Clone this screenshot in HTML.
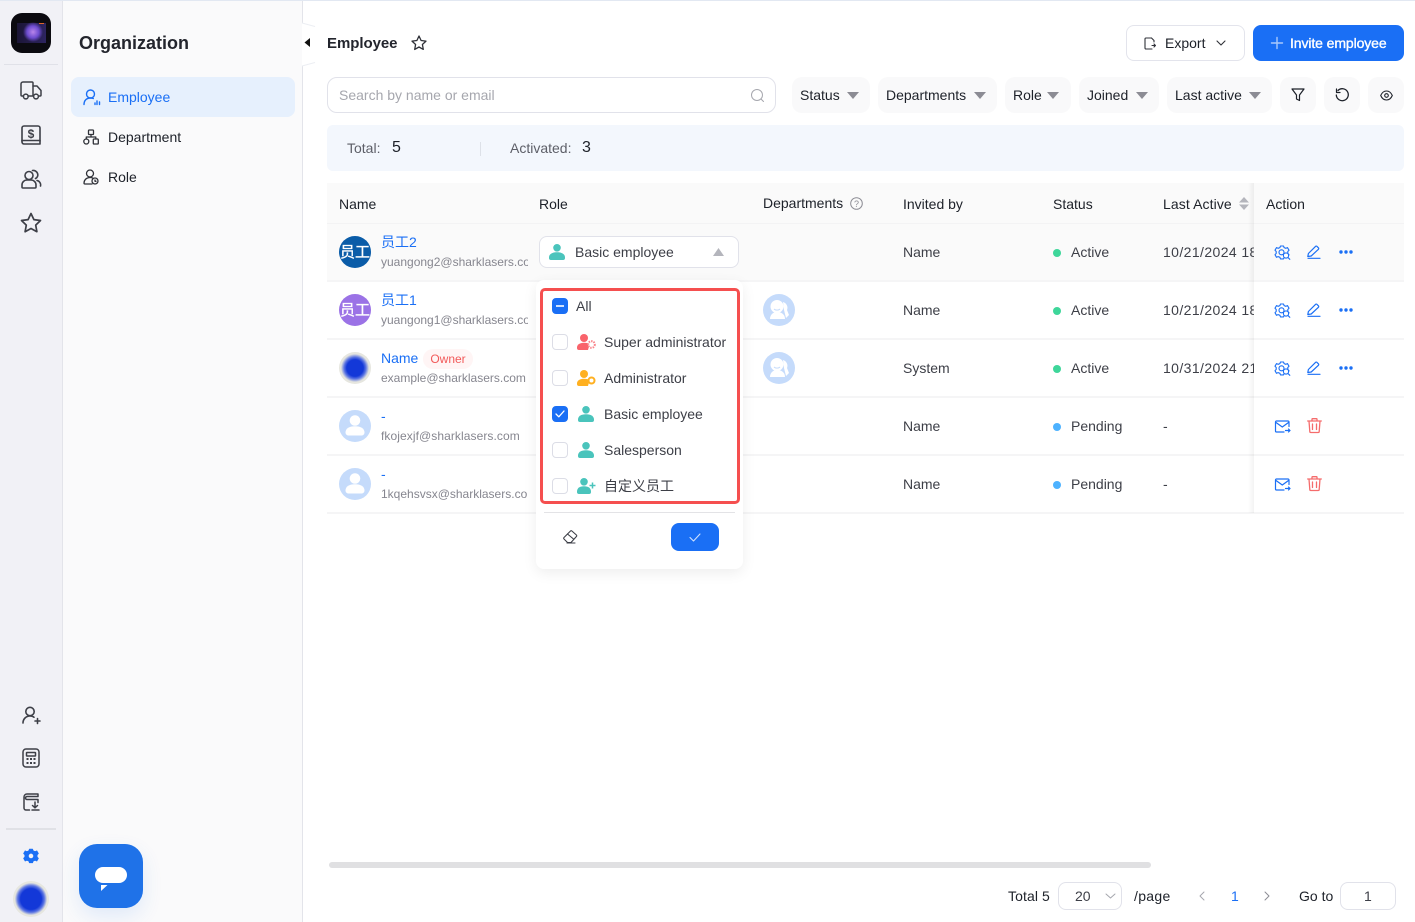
<!DOCTYPE html>
<html><head><meta charset="utf-8"><style>
*{box-sizing:border-box}
html,body{margin:0;padding:0;width:1415px;height:922px;overflow:hidden;background:#fff;font-family:"Liberation Sans","Noto Sans CJK SC",sans-serif;font-size:14px;color:#1d2129}
.a{position:absolute}
.t{position:absolute;white-space:nowrap;line-height:20px}
svg{position:absolute;overflow:visible}
.ln{fill:none;stroke-linecap:round;stroke-linejoin:round}
.fb{position:absolute;top:77px;height:36px;background:#f9f9fa;border-radius:10px}
.tri{position:absolute;width:0;height:0;border-left:6px solid transparent;border-right:6px solid transparent;border-top:7px solid #8c8c94}
.cb{position:absolute;left:552px;width:16px;height:16px;border-radius:4px;border:1px solid #dcdde6;background:#fff}
.cb.on{background:#1a6ff5;border-color:#1a6ff5}
.rowl{position:absolute;left:327px;width:1077px;height:2px;background:#f5f5f6}
.mail{color:#86868f;font-size:12px}
.nm{color:#1a6ff5}
.dot{position:absolute;left:1053px;width:8px;height:8px;border-radius:50%}
.g{color:#3d3f47}
.av{position:absolute;left:339px;width:32px;height:32px;border-radius:50%;color:#fff;font-size:15px;text-align:center;line-height:33px;-webkit-text-stroke:.3px #fff}
.clip{position:absolute;overflow:hidden;white-space:nowrap}
</style></head><body>
<div class="a" style="left:0;top:0;width:1415px;height:1px;background:#e2e8f2"></div>

<!-- rail -->
<div class="a" style="left:0;top:1px;width:63px;height:921px;background:#f1f1f6;border-right:1px solid #e3e4ea"></div>
<div class="a" style="left:11px;top:13px;width:40px;height:40px;border-radius:11px;background:#0b0a10;overflow:hidden">
 <div class="a" style="left:6px;top:10px;width:29px;height:20px;background:linear-gradient(90deg,#1b1536,#2d2460)"></div>
 <div class="a" style="left:12px;top:9px;width:20px;height:20px;background:radial-gradient(circle closest-side,#b885ea,#6d4ccf 60%,transparent)"></div>
 <div class="a" style="left:28px;top:10px;width:5px;height:1px;background:#e0662a"></div>
</div>
<div class="a" style="left:4px;top:64px;width:54px;height:1px;background:#e0e1e8"></div>
<svg style="left:20px;top:81px" width="22" height="20" viewBox="0 0 22 20"><g class="ln" stroke="#3d3f47" stroke-width="1.500"><path d="M3.500 15H2a1 1 0 0 1-1-1V3a2 2 0 0 1 2-2h9a1 1 0 0 1 1 1v13H8"/><path d="M13 5h4l4 4.500V14a1 1 0 0 1-1 1h-1"/><circle cx="5.800" cy="15.500" r="2.400"/><circle cx="16" cy="15.500" r="2.400"/></g></svg>
<svg style="left:21px;top:125px" width="20" height="20" viewBox="0 0 20 20"><g class="ln" stroke="#3d3f47" stroke-width="1.600"><path d="M1 16V3a2 2 0 0 1 2-2h14a2 2 0 0 1 2 2v13"/><path d="M1 15.500h18V19H3a2 2 0 0 1-2-2z"/></g><text x="10" y="13" font-size="12" font-weight="bold" text-anchor="middle" fill="#3d3f47" font-family="Liberation Sans">$</text></svg>
<svg style="left:21px;top:169px" width="21" height="20" viewBox="0 0 21 20"><g class="ln" stroke="#3d3f47" stroke-width="1.600"><circle cx="8" cy="6.500" r="4"/><path d="M1 18v-2a5 5 0 0 1 5-5h4a5 5 0 0 1 5 5v2a1 1 0 0 1-1 1H2a1 1 0 0 1-1-1z"/><path d="M11.500 1.500a4.500 4.500 0 0 1 5 6 4 4 0 0 1-2 2M16 11.500a4.500 4.500 0 0 1 3.500 5.500"/></g></svg>
<svg style="left:20px;top:212px" width="22" height="22" viewBox="0 0 22 22"><path class="ln" stroke="#3d3f47" stroke-width="1.700" d="M11 1.500l2.900 6.100 6.600.9-4.800 4.600 1.200 6.600-5.900-3.200-5.900 3.200 1.200-6.600L1.500 8.500l6.600-.9z"/></svg>

<svg style="left:22px;top:706px" width="19" height="18" viewBox="0 0 19 18"><g class="ln" stroke="#3d3f47" stroke-width="1.600"><circle cx="8" cy="5.500" r="4.200"/><path d="M1 17c0-4 3-7 7-7 1.500 0 3 .4 4 1.200M13 15h5M15.500 12.500v5"/></g></svg>
<svg style="left:22px;top:748px" width="18" height="20" viewBox="0 0 18 20"><g class="ln" stroke="#3d3f47" stroke-width="1.500"><rect x="1" y="1" width="16" height="18" rx="3"/><rect x="4.500" y="4.500" width="9" height="3.500" rx=".5"/></g><g fill="#3d3f47"><rect x="4.500" y="10" width="2" height="2"/><rect x="8" y="10" width="2" height="2"/><rect x="11.500" y="10" width="2" height="2"/><rect x="4.500" y="14" width="2" height="2"/><rect x="8" y="14" width="2" height="2"/><rect x="11.500" y="14" width="2" height="2"/></g></svg>
<svg style="left:23px;top:793px" width="17" height="18" viewBox="0 0 17 18"><g class="ln" stroke="#3d3f47" stroke-width="1.500"><path d="M6.500 17H3a2 2 0 0 1-2-2V4a3 3 0 0 1 3-3h11v2.500H4A1.500 1.500 0 0 0 4 6.500h11v3"/><path d="M12 9v5.500M9.500 12.500l2.500 2.300 2.500-2.300M9 17h7"/></g></svg>
<div class="a" style="left:6px;top:828px;width:50px;height:2px;background:#e0e1e6"></div>
<svg style="left:23px;top:848px" width="16" height="16" viewBox="0 0 14 15"><path fill="#1a6ff5" fill-rule="evenodd" stroke="#1a6ff5" stroke-width=".6" stroke-linejoin="round" d="M5.500 1h3l.6 1.600 1.800.7 1.600-.7 1.500 2.600-1.200 1.300v1.900l1.200 1.300-1.500 2.600-1.600-.7-1.800.7-.6 1.600h-3l-.6-1.600-1.800-.7-1.600.7L0 9.700l1.200-1.300V6.500L0 5.200l1.500-2.600 1.600.7 1.800-.7zM7 5a2.450 2.450 0 1 0 0 4.900A2.450 2.450 0 0 0 7 5z"/></svg>
<div class="a" style="left:13px;top:881px;width:36px;height:36px;border-radius:50%;background:radial-gradient(circle closest-side,#1338d8 0 58%,#5b74e2 74%,#e6e6df 90%)"></div>

<!-- sidebar -->
<div class="a" style="left:63px;top:1px;width:240px;height:921px;background:#fafafb;border-right:1px solid #e3e4ea"></div>
<div class="t" style="left:79px;top:33px;font-size:18px;font-weight:bold;color:#23252d">Organization</div>
<div class="a" style="left:71px;top:77px;width:224px;height:40px;border-radius:8px;background:#e6f0fd"></div>
<svg style="left:83px;top:89px" width="18" height="17" viewBox="0 0 18 17"><g class="ln" stroke="#1a6ff5" stroke-width="1.400"><circle cx="7.500" cy="5" r="4"/><path d="M1 15.500c0-4 2.500-6.500 6.500-6.500 1 0 2 .2 2.800.5"/><path d="M12 14v1.500M14 12v3.500M16.500 13v2.500"/></g></svg>
<div class="t nm" style="left:108px;top:87px">Employee</div>
<svg style="left:83px;top:129px" width="16" height="16" viewBox="0 0 16 16"><g class="ln" stroke="#2f3138" stroke-width="1.300"><rect x="5.500" y="1" width="5" height="4.500" rx=".8"/><circle cx="3.300" cy="12.500" r="2.500"/><rect x="10.300" y="10" width="5" height="5" rx=".8"/><path d="M8 5.500V8M3.300 10V8h9.500v2"/></g></svg>
<div class="t" style="left:108px;top:127px">Department</div>
<svg style="left:83px;top:169px" width="16" height="16" viewBox="0 0 16 16"><g class="ln" stroke="#2f3138" stroke-width="1.300"><circle cx="7" cy="4.500" r="3.500"/><path d="M9 15H2a1 1 0 0 1-1-1c0-3 2.500-5.500 6-5.500 1 0 2 .2 2.800.6"/><circle cx="12" cy="12" r="3"/><path d="M12 11v1.300h1"/></g></svg>
<div class="t" style="left:108px;top:167px">Role</div>
<div class="a" style="left:79px;top:844px;width:64px;height:64px;border-radius:18px;background:#1f72e8;box-shadow:0 8px 20px rgba(31,114,232,.12)"></div>
<div class="a" style="left:95px;top:867px;width:32px;height:16px;border-radius:8px;background:#fff"></div>
<svg style="left:101px;top:885px" width="7" height="6"><path fill="#fff" d="M0 0h6.500L0 6z"/></svg>
<!-- collapse tab -->
<svg style="left:302px;top:23px" width="14" height="43" viewBox="0 0 14 43"><path d="M0 0l13 4v35L0 43z" fill="#fff"/><path d="M0 0l13 3.500M13 39.500L0 43" stroke="#eceef3" fill="none"/><path d="M8 15v9l-5.500-4.500z" fill="#111"/></svg>

<!-- header -->
<div class="t" style="left:327px;top:33.500px;font-size:15px;font-weight:bold;color:#23252d;letter-spacing:-.05px">Employee</div>
<svg style="left:411px;top:35px" width="16" height="16" viewBox="0 0 16 16"><path class="ln" stroke="#2f3138" stroke-width="1.300" d="M8 1l2.100 4.500 4.900.6-3.600 3.400.9 4.900L8 12l-4.300 2.400.9-4.900L1 6.100l4.900-.6z"/></svg>
<div class="a" style="left:1126px;top:25px;width:119px;height:36px;border:1px solid #e3e4ec;border-radius:8px;background:#fff"></div>
<svg style="left:1144px;top:37px" width="12" height="13" viewBox="0 0 12 13"><g class="ln" stroke="#2f3138" stroke-width="1.100"><path d="M7.500 1H2a1 1 0 0 0-1 1v9a1 1 0 0 0 1 1h6"/><path d="M7.500 1L10 3.500V5M8 8.500h3.500M10 7l1.500 1.500L10 10"/></g></svg>
<div class="t" style="left:1165px;top:33px">Export</div>
<svg style="left:1216px;top:40px" width="10" height="6"><path class="ln" stroke="#2f3138" stroke-width="1.100" d="M1 1l4 4 4-4"/></svg>
<div class="a" style="left:1253px;top:25px;width:151px;height:36px;border-radius:8px;background:#1a6ff5"></div>
<svg style="left:1270px;top:36px" width="14" height="14"><path class="ln" stroke="#a9c9fb" stroke-width="1.400" d="M7 1.500v11M1.500 7h11"/></svg>
<div class="t" style="left:1290px;top:33px;color:#fff;-webkit-text-stroke:.35px #fff;letter-spacing:-.1px">Invite employee</div>

<!-- search -->
<div class="a" style="left:327px;top:77px;width:449px;height:36px;border:1px solid #e1e2ea;border-radius:10px;background:#fff"></div>
<div class="t" style="left:339px;top:85px;color:#a6a7ae">Search by name or email</div>
<svg style="left:751px;top:89px" width="13" height="13"><g class="ln" stroke="#a6a7ae" stroke-width="1"><circle cx="6" cy="6" r="5.500"/><path d="M10 10l2.500 2.500"/></g></svg>

<!-- filters -->
<div class="fb" style="left:792px;width:78px"></div><div class="t" style="left:800px;top:85px">Status</div><div class="tri" style="left:847px;top:92px"></div>
<div class="fb" style="left:878px;width:119px"></div><div class="t" style="left:886px;top:85px">Departments</div><div class="tri" style="left:974px;top:92px"></div>
<div class="fb" style="left:1005px;width:66px"></div><div class="t" style="left:1013px;top:85px">Role</div><div class="tri" style="left:1047px;top:92px"></div>
<div class="fb" style="left:1079px;width:80px"></div><div class="t" style="left:1087px;top:85px">Joined</div><div class="tri" style="left:1136px;top:92px"></div>
<div class="fb" style="left:1167px;width:105px"></div><div class="t" style="left:1175px;top:85px">Last active</div><div class="tri" style="left:1249px;top:92px"></div>
<div class="fb" style="left:1280px;width:36px"></div>
<svg style="left:1291px;top:88px" width="14" height="14"><path class="ln" stroke="#1d2129" stroke-width="1.200" d="M1 1h12L8.500 7v5.500l-3-1.500V7z"/></svg>
<div class="fb" style="left:1324px;width:36px"></div>
<svg style="left:1335px;top:88px" width="14" height="14" viewBox="0 0 14 14"><g class="ln" stroke="#1d2129" stroke-width="1.300"><path d="M3 2.500A6 6 0 1 1 1.300 7"/><path d="M1.500 1v3.500H5" stroke-width="1.200"/></g></svg>
<div class="fb" style="left:1368px;width:36px"></div>
<svg style="left:1380px;top:90px" width="13" height="11" viewBox="0 0 13 11"><g class="ln" stroke="#1d2129" stroke-width="1.100"><path d="M.7 5.500C2 2.500 4 1 6.500 1s4.500 1.500 5.800 4.500C11 8.500 9 10 6.500 10S2 8.500.7 5.500z"/><circle cx="6.500" cy="5.500" r="1.800"/></g></svg>

<!-- stats -->
<div class="a" style="left:327px;top:125px;width:1077px;height:46px;background:#f3f7fd;border-radius:6px"></div>
<div class="t" style="left:347px;top:138px;color:#5d5f68">Total:</div>
<div class="t" style="left:392px;top:138px;font-size:16px;color:#1d2129">5</div>
<div class="a" style="left:480px;top:142px;width:1px;height:14px;background:#dde1e8"></div>
<div class="t" style="left:510px;top:138px;color:#5d5f68">Activated:</div>
<div class="t" style="left:582px;top:138px;font-size:16px;color:#1d2129">3</div>

<!-- table -->
<div class="a" style="left:327px;top:183px;width:1077px;height:98px;background:#fafafa"></div>
<div class="a" style="left:327px;top:223px;width:1077px;height:1px;background:#f3f3f4"></div>
<div class="rowl" style="top:280px"></div><div class="rowl" style="top:338px"></div><div class="rowl" style="top:396px"></div><div class="rowl" style="top:454px"></div><div class="rowl" style="top:512px"></div>
<div class="t" style="left:339px;top:194px">Name</div>
<div class="t" style="left:539px;top:194px">Role</div>
<div class="t" style="left:763px;top:193px">Departments</div>
<svg style="left:850px;top:197px" width="13" height="13"><circle cx="6.500" cy="6.500" r="5.800" fill="none" stroke="#8c8c94"/><text x="6.500" y="9.800" font-size="9" text-anchor="middle" fill="#8c8c94" font-family="Liberation Sans">?</text></svg>
<div class="t" style="left:903px;top:194px">Invited by</div>
<div class="t" style="left:1053px;top:194px">Status</div>
<div class="t" style="left:1163px;top:194px;letter-spacing:.1px">Last Active</div>
<svg style="left:1239px;top:197px" width="10" height="13"><path fill="#b4b5bc" d="M5 0l5 5.500H0zM0 7.500h10L5 13z"/></svg>

<!-- names -->
<div class="av" style="top:236px;background:#0a5ca8">员工</div>
<div class="t nm" style="left:381px;top:232px">员工2</div>
<div class="clip mail" style="left:381px;top:254px;width:147px;line-height:16px">yuangong2@sharklasers.com</div>
<div class="av" style="top:294px;background:#9b72e6">员工</div>
<div class="t nm" style="left:381px;top:290px">员工1</div>
<div class="clip mail" style="left:381px;top:312px;width:147px;line-height:16px">yuangong1@sharklasers.com</div>
<div class="a" style="left:339px;top:352px;width:32px;height:32px;border-radius:50%;background:radial-gradient(circle closest-side,#1338d8 0 52%,#5b74e2 68%,#e6e6df 88%)"></div>
<div class="t nm" style="left:381px;top:348px">Name</div>
<div class="a" style="left:423px;top:349px;width:50px;height:20px;border-radius:10px;background:#fff5f5;color:#f25a5a;font-size:12px;line-height:20px;text-align:center">Owner</div>
<div class="t mail" style="left:381px;top:368px">example@sharklasers.com</div>
<svg style="left:339px;top:410px" width="32" height="32"><circle cx="16" cy="16" r="16" fill="#c5dbfb"/><circle cx="16" cy="10.500" r="5.300" fill="#fff"/><path fill="#fff" d="M16 16.200c6 0 9.500 2.300 9.500 6.300 0 1.700-1.300 3-3 3h-13c-1.700 0-3-1.300-3-3 0-4 3.500-6.300 9.500-6.300z"/></svg>
<div class="t nm" style="left:381px;top:406px">-</div>
<div class="t mail" style="left:381px;top:426px;letter-spacing:.08px">fkojexjf@sharklasers.com</div>
<svg style="left:339px;top:468px" width="32" height="32"><circle cx="16" cy="16" r="16" fill="#c5dbfb"/><circle cx="16" cy="10.500" r="5.300" fill="#fff"/><path fill="#fff" d="M16 16.200c6 0 9.500 2.300 9.500 6.300 0 1.700-1.300 3-3 3h-13c-1.700 0-3-1.300-3-3 0-4 3.500-6.300 9.500-6.300z"/></svg>
<div class="t nm" style="left:381px;top:464px">-</div>
<div class="clip mail" style="left:381px;top:486px;width:146px;line-height:16px">1kqehsvsx@sharklasers.com</div>

<!-- role select -->
<div class="a" style="left:539px;top:236px;width:200px;height:32px;border:1px solid #e1e2ea;border-radius:8px;background:#fff"></div>
<svg style="left:549px;top:244px" width="16" height="16"><circle cx="8" cy="3.800" r="3.800" fill="#4ac4bc"/><path fill="#4ac4bc" d="M8 8.200c5 0 8 2 8 5.300V14a2 2 0 0 1-2 2H2a2 2 0 0 1-2-2v-.5C0 10.200 3 8.200 8 8.200z"/></svg>
<div class="t g" style="left:575px;top:242px">Basic employee</div>
<svg style="left:713px;top:248px" width="11" height="8"><path fill="#b4b5bc" d="M5.500 0L11 8H0z"/></svg>

<!-- dept icons -->
<svg style="left:763px;top:294px" width="32" height="32"><circle cx="16" cy="16" r="16" fill="#c5dbfb"/><circle cx="14" cy="12.500" r="6.500" fill="#fff"/><path fill="#fff" d="M7 25c0-4 3-7 7-7s8 2 8 7zM20 8a6 6 0 0 1 4 8l2 5-3 3-2-8z"/><path d="M11 15c1.500 1.500 4.500 1.500 6 0" stroke="#c5dbfb" fill="none"/></svg>
<svg style="left:763px;top:352px" width="32" height="32"><circle cx="16" cy="16" r="16" fill="#c5dbfb"/><circle cx="14" cy="12.500" r="6.500" fill="#fff"/><path fill="#fff" d="M7 25c0-4 3-7 7-7s8 2 8 7zM20 8a6 6 0 0 1 4 8l2 5-3 3-2-8z"/><path d="M11 15c1.500 1.500 4.500 1.500 6 0" stroke="#c5dbfb" fill="none"/></svg>

<!-- invited / status -->
<div class="t g" style="left:903px;top:242px">Name</div><div class="t g" style="left:903px;top:300px">Name</div><div class="t g" style="left:903px;top:358px">System</div><div class="t g" style="left:903px;top:416px">Name</div><div class="t g" style="left:903px;top:474px">Name</div>
<div class="dot" style="top:249px;background:#3ed69a"></div><div class="t g" style="left:1071px;top:242px">Active</div>
<div class="dot" style="top:307px;background:#3ed69a"></div><div class="t g" style="left:1071px;top:300px">Active</div>
<div class="dot" style="top:365px;background:#3ed69a"></div><div class="t g" style="left:1071px;top:358px">Active</div>
<div class="dot" style="top:423px;background:#4db2ff"></div><div class="t g" style="left:1071px;top:416px">Pending</div>
<div class="dot" style="top:481px;background:#4db2ff"></div><div class="t g" style="left:1071px;top:474px">Pending</div>
<div class="clip g" style="left:1163px;top:242px;width:91px;line-height:20px;letter-spacing:.4px">10/21/2024 18:00</div>
<div class="clip g" style="left:1163px;top:300px;width:91px;line-height:20px;letter-spacing:.4px">10/21/2024 18:00</div>
<div class="clip g" style="left:1163px;top:358px;width:91px;line-height:20px;letter-spacing:.4px">10/31/2024 21:00</div>
<div class="t g" style="left:1163px;top:416px">-</div><div class="t g" style="left:1163px;top:474px">-</div>

<!-- action col -->
<div class="a" style="left:1248px;top:183px;width:6px;height:330px;background:linear-gradient(90deg,rgba(0,0,0,0),rgba(0,0,0,.05))"></div>
<div class="t" style="left:1266px;top:194px">Action</div>
<svg width="0" height="0"><defs>
<g id="gear"><path class="ln" stroke="#1a6ff5" stroke-width="1.100" d="M5.500 1h3l.6 1.600 1.800.7 1.600-.7 1.500 2.600-1.200 1.300v1.900l1.200 1.300-1.500 2.600-1.600-.7-1.800.7-.6 1.600h-3l-.6-1.600-1.800-.7-1.600.7L0 9.700l1.200-1.300V6.500L0 5.200l1.500-2.600 1.600.7 1.800-.7z"/><circle cx="6.500" cy="7.300" r="2.500" class="ln" stroke="#1a6ff5" stroke-width="1.100"/><circle cx="11" cy="10.500" r="2.600" stroke="#1a6ff5" stroke-width="1.100" fill="#fff"/><path class="ln" stroke="#1a6ff5" stroke-width="1.100" d="M13 12.500l1.800 1.800"/></g>
<g id="pen"><path class="ln" stroke="#1a6ff5" stroke-width="1.200" d="M.8 11.500l.6-3L8.500 1.400a1 1 0 0 1 1.500 0l1.400 1.400a1 1 0 0 1 0 1.500L4.200 11zM1 13.300h12"/></g>
<g id="dots" fill="#1a6ff5"><circle cx="2" cy="2" r="1.700"/><circle cx="7" cy="2" r="1.700"/><circle cx="12" cy="2" r="1.700"/></g>
<g id="env"><path class="ln" stroke="#1a6ff5" stroke-width="1.200" d="M14 6.500V2a1 1 0 0 0-1-1H1.500a1 1 0 0 0-1 1v9a1 1 0 0 0 1 1H9"/><path class="ln" stroke="#1a6ff5" stroke-width="1.200" d="M1 2.500l6.300 4.500 6.200-4.500M10.500 10.500h4.500M13.500 9l1.500 1.500-1.500 1.500"/></g>
<g id="trash"><path class="ln" stroke="#f56c6c" stroke-width="1.300" d="M.7 3h13.600M5 3V1.200a.5.500 0 0 1 .5-.5h4a.5.500 0 0 1 .5.500V3M2 3l.8 10.500a1 1 0 0 0 1 1h7.400a1 1 0 0 0 1-1L13 3M5.500 6v5.500M9.500 6v5.500"/></g>
</defs></svg>
<svg style="left:1275px;top:245px" width="16" height="15"><use href="#gear"/></svg>
<svg style="left:1307px;top:245px" width="14" height="15"><use href="#pen"/></svg>
<svg style="left:1339px;top:250px" width="15" height="4"><use href="#dots"/></svg>
<svg style="left:1275px;top:303px" width="16" height="15"><use href="#gear"/></svg>
<svg style="left:1307px;top:303px" width="14" height="15"><use href="#pen"/></svg>
<svg style="left:1339px;top:308px" width="15" height="4"><use href="#dots"/></svg>
<svg style="left:1275px;top:361px" width="16" height="15"><use href="#gear"/></svg>
<svg style="left:1307px;top:361px" width="14" height="15"><use href="#pen"/></svg>
<svg style="left:1339px;top:366px" width="15" height="4"><use href="#dots"/></svg>
<svg style="left:1275px;top:420px" width="15" height="13"><use href="#env"/></svg>
<svg style="left:1307px;top:418px" width="15" height="15"><use href="#trash"/></svg>
<svg style="left:1275px;top:478px" width="15" height="13"><use href="#env"/></svg>
<svg style="left:1307px;top:476px" width="15" height="15"><use href="#trash"/></svg>

<!-- dropdown -->
<div class="a" style="left:536px;top:280px;width:207px;height:289px;background:#fff;border-radius:8px;box-shadow:0 4px 14px rgba(0,0,0,.07)"></div>
<div class="a" style="left:540px;top:288px;width:200px;height:216px;border:3px solid #f54f4f;border-radius:5px"></div>
<div class="cb on" style="top:298px"></div><div class="a" style="left:556px;top:305px;width:8px;height:2px;background:#cfe1fd"></div>
<div class="t g" style="left:576px;top:296px">All</div>
<div class="cb" style="top:334px"></div>
<svg style="left:577px;top:334px" width="19" height="17" viewBox="0 0 19 17"><circle cx="7" cy="4" r="4" fill="#f9636b"/><path fill="#f9636b" d="M7 8.800c2.500 0 4.500.5 5.500 1.700L11 16H2a2 2 0 0 1-2-2v-.5C0 10.500 3 8.800 7 8.800z"/><circle cx="14.500" cy="10.500" r="3.300" fill="#fff" stroke="#f9858b" stroke-width="2" stroke-dasharray="1.500 1"/></svg>
<div class="t g" style="left:604px;top:332px">Super administrator</div>
<div class="cb" style="top:370px"></div>
<svg style="left:577px;top:370px" width="19" height="17" viewBox="0 0 19 17"><circle cx="7" cy="4" r="4" fill="#ffb020"/><path fill="#ffb020" d="M7 8.800c2.500 0 4.500.5 5.500 1.700L11 16H2a2 2 0 0 1-2-2v-.5C0 10.500 3 8.800 7 8.800z"/><circle cx="14.500" cy="10.500" r="3" fill="#fff" stroke="#ffb020" stroke-width="2"/></svg>
<div class="t g" style="left:604px;top:368px">Administrator</div>
<div class="cb on" style="top:406px"></div>
<svg style="left:555px;top:410px" width="10" height="8"><path class="ln" stroke="#fff" stroke-width="1.300" d="M1 4l2.800 2.800L9 1"/></svg>
<svg style="left:578px;top:406px" width="16" height="16"><circle cx="8" cy="3.800" r="3.800" fill="#4ac4bc"/><path fill="#4ac4bc" d="M8 8.200c5 0 8 2 8 5.300V14a2 2 0 0 1-2 2H2a2 2 0 0 1-2-2v-.5C0 10.200 3 8.200 8 8.200z"/></svg>
<div class="t g" style="left:604px;top:404px">Basic employee</div>
<div class="cb" style="top:442px"></div>
<svg style="left:578px;top:442px" width="16" height="16"><circle cx="8" cy="3.800" r="3.800" fill="#4ac4bc"/><path fill="#4ac4bc" d="M8 8.200c5 0 8 2 8 5.300V14a2 2 0 0 1-2 2H2a2 2 0 0 1-2-2v-.5C0 10.200 3 8.200 8 8.200z"/></svg>
<div class="t g" style="left:604px;top:440px">Salesperson</div>
<div class="cb" style="top:478px"></div>
<svg style="left:577px;top:478px" width="19" height="16" viewBox="0 0 19 16"><circle cx="7" cy="3.800" r="3.800" fill="#4ac4bc"/><path fill="#4ac4bc" d="M7 8.200c4.500 0 7 2 7 5.300V14a2 2 0 0 1-2 2H2a2 2 0 0 1-2-2v-.5C0 10.200 2.500 8.200 7 8.200z"/><path stroke="#4ac4bc" stroke-width="1.500" d="M15.500 4.500v6M12.500 7.500h6"/></svg>
<div class="t g" style="left:604px;top:476px">自定义员工</div>
<div class="a" style="left:544px;top:512px;width:191px;height:1px;background:#e3e3e6"></div>
<svg style="left:563px;top:530px" width="15" height="14" viewBox="0 0 15 14"><g class="ln" stroke="#3d3f47" stroke-width="1.100"><path d="M1 7.500L7.500 1a1 1 0 0 1 1.400 0l4.500 4a1 1 0 0 1 0 1.500L8 12.500H4.500L1 9a1 1 0 0 1 0-1.500z"/><path d="M4.500 4l6 5M4 13h8"/></g></svg>
<div class="a" style="left:671px;top:523px;width:48px;height:28px;background:#1a6ff5;border-radius:8px"></div>
<svg style="left:689px;top:533px" width="12" height="9"><path class="ln" stroke="#cfe1fd" stroke-width="1.100" d="M1 4.500l3.500 3.500L11 1"/></svg>

<!-- scrollbar -->
<div class="a" style="left:329px;top:862px;width:822px;height:6px;border-radius:3px;background:#e0e0e2"></div>

<!-- pagination -->
<div class="t" style="left:1008px;top:886px;letter-spacing:.1px">Total 5</div>
<div class="a" style="left:1058px;top:882px;width:64px;height:28px;border:1px solid #e1e2ea;border-radius:8px"></div>
<div class="t g" style="left:1075px;top:886px">20</div>
<svg style="left:1105px;top:893px" width="11" height="6"><path class="ln" stroke="#a6a7ae" d="M1 1l4.500 4L10 1"/></svg>
<div class="t" style="left:1134px;top:886px;letter-spacing:.3px">/page</div>
<svg style="left:1199px;top:891px" width="6" height="10"><path class="ln" stroke="#a6a7ae" d="M5 1L1 5l4 4"/></svg>
<div class="t nm" style="left:1231px;top:886px">1</div>
<svg style="left:1264px;top:891px" width="6" height="10"><path class="ln" stroke="#8c8c94" d="M1 1l4 4-4 4"/></svg>
<div class="t" style="left:1299px;top:886px">Go to</div>
<div class="a" style="left:1340px;top:882px;width:56px;height:28px;border:1px solid #e1e2ea;border-radius:8px"></div>
<div class="t g" style="left:1364px;top:886px">1</div>
</body></html>
